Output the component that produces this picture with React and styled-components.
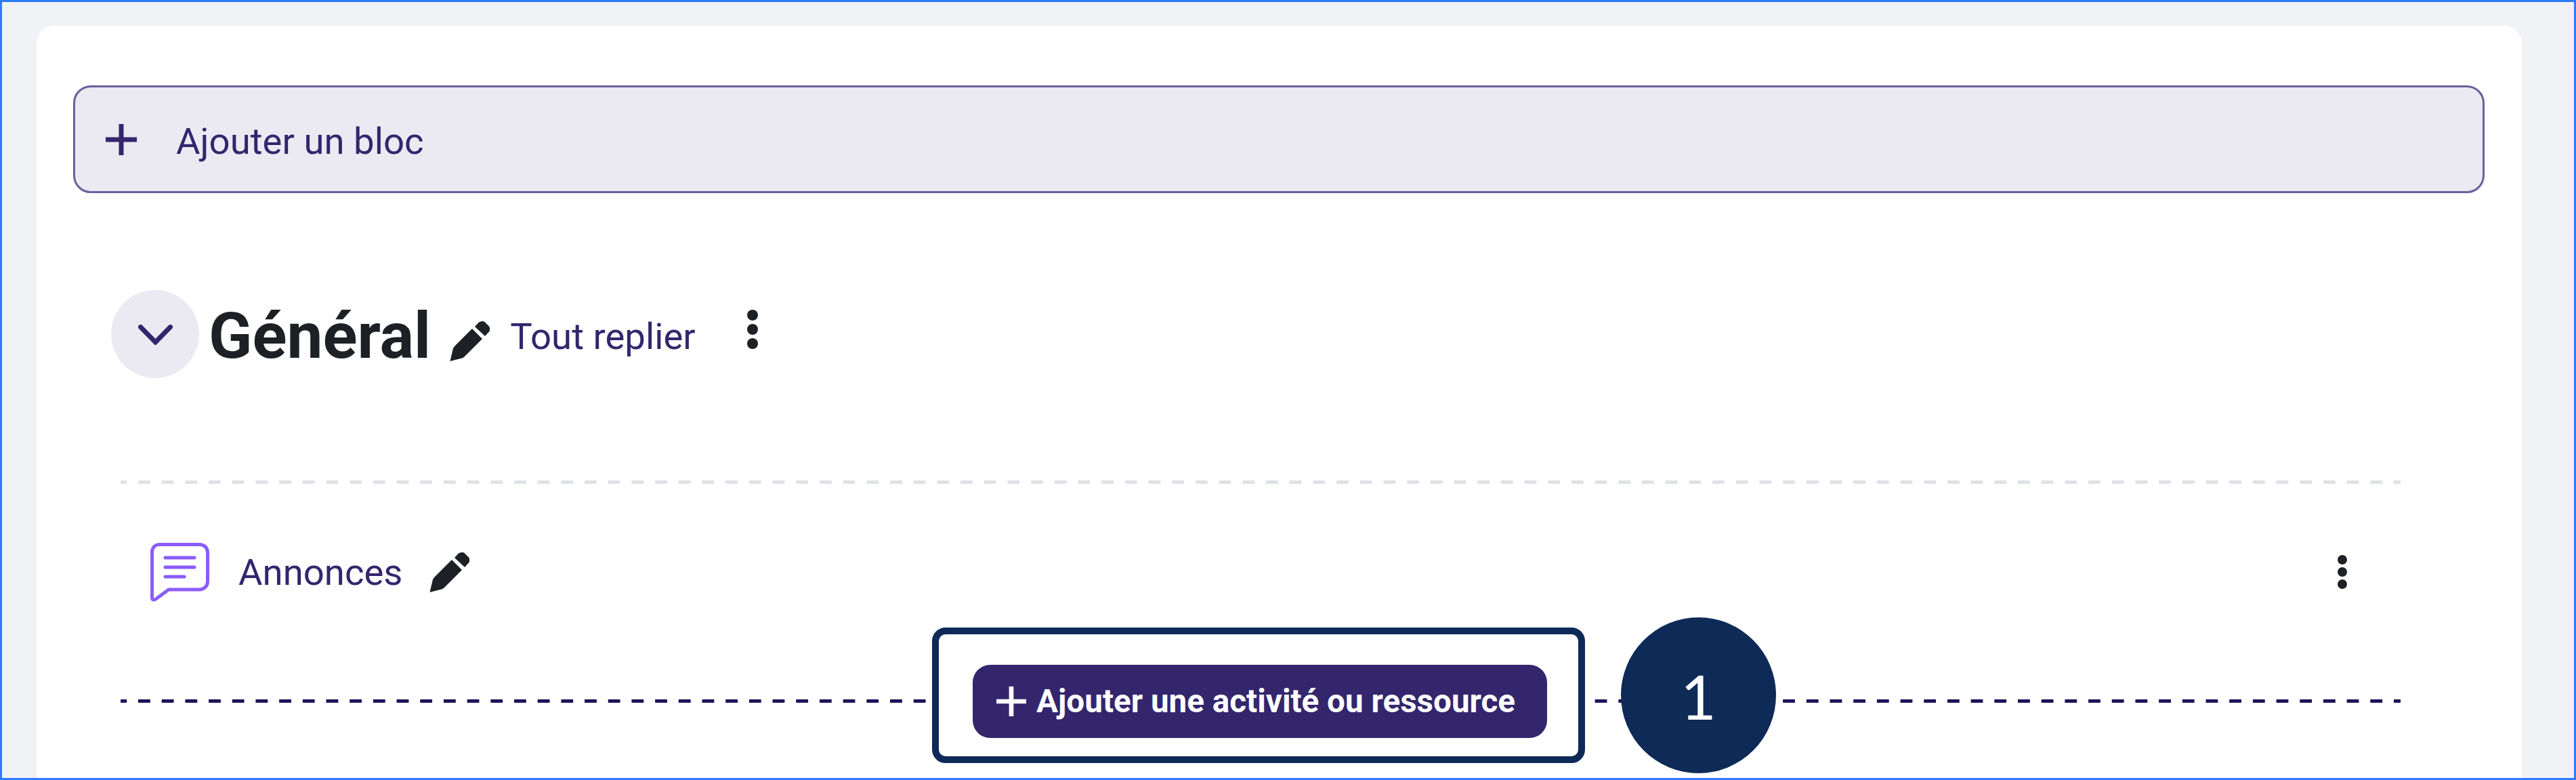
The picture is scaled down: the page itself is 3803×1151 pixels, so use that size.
import React from 'react';
import styled, { createGlobalStyle } from 'styled-components';

const GlobalStyle = createGlobalStyle`
  html, body {
    margin: 0;
    padding: 0;
    background: #f1f2f6;
  }
  body {
    font-family: 'Roboto', 'Liberation Sans', sans-serif;
  }
`;

const PURPLE = '#33266d';
const NAVY = '#0e2a57';

const Frame = styled.div`
  box-sizing: border-box;
  width: 3803px;
  height: 1151px;
  border: 3px solid #2f7bff;
  background: #f1f2f6;
  padding: 35px 77px 0 51px;
  overflow: hidden;
`;

const Card = styled.main`
  position: relative;
  box-sizing: border-box;
  height: 1113px;
  padding: 88px 55px 0 54px;
  background: #fff;
  border-radius: 26px 26px 0 0;
`;

const AddBlock = styled.div`
  box-sizing: border-box;
  height: 159px;
  display: flex;
  align-items: center;
  gap: 58px;
  padding-left: 45px;
  background: #ebeaf2;
  border: 3px solid #6b5f9b;
  border-radius: 26px;
  color: ${PURPLE};
  font-size: 54.5px;
  font-weight: 450;
`;

const AddBlockLabel = styled.span`
  padding-top: 4px;
`;

const SectionHeader = styled.header`
  display: flex;
  align-items: center;
  height: 130px;
  margin: 143px 0 0 56px;
`;

const Toggle = styled.div`
  width: 130px;
  height: 130px;
  border-radius: 50%;
  background: #ebeaf2;
  display: flex;
  align-items: center;
  justify-content: center;
  margin-right: 14px;
  padding-top: 2px;
  box-sizing: border-box;
`;

const Title = styled.h2`
  margin: 5px 28px 0 0;
  font-size: 94.5px;
  font-weight: 700;
  color: #1d2125;
  line-height: 130px;
`;

const HeaderPencil = styled.div`
  display: flex;
  margin-top: 20px;
`;

const CollapseLink = styled.span`
  margin: 5px 0 0 29px;
  font-size: 54.5px;
  font-weight: 450;
  color: ${PURPLE};
`;

const HeaderMenu = styled.div`
  margin: -14px 0 0 76px;
  display: flex;
`;

const Divider = styled.div`
  height: 5px;
  margin: ${(p) => p.$top}px 124px 0 70px;
  background-image: linear-gradient(90deg, ${(p) => p.$color} 0 18px, transparent 18px);
  background-size: 34.7px 100%;
  background-position: 26px 0;
`;

const ActivityRow = styled.div`
  display: flex;
  align-items: center;
  height: 88px;
  margin: 86px 0 0 113px;
  padding-right: 203px;
`;

const ActivityName = styled.span`
  margin-left: 43px;
  margin-right: 40px;
  font-size: 54.5px;
  font-weight: 450;
  color: ${PURPLE};
`;

const RowMenu = styled.div`
  margin-left: auto;
  display: flex;
`;

/* annotation on top of the screenshot */
const Highlight = styled.div`
  position: absolute;
  left: 1322px;
  top: 888px;
  box-sizing: border-box;
  width: 964px;
  height: 200px;
  background: #fff;
  border: 10px solid ${NAVY};
  border-radius: 20px;
  display: flex;
  align-items: center;
  justify-content: center;
`;

const AddButton = styled.div`
  box-sizing: border-box;
  width: 848px;
  height: 108px;
  margin: 18px 0 0 4px;
  display: flex;
  align-items: center;
  gap: 15px;
  padding-left: 35px;
  background: ${PURPLE};
  border-radius: 26px;
  color: #fff;
  font-size: 47.6px;
  font-weight: 700;
`;

const StepBadge = styled.div`
  position: absolute;
  left: 2339px;
  top: 873px;
  width: 229px;
  height: 230px;
  border-radius: 50%;
  background: ${NAVY};
  color: #fff;
  display: flex;
  align-items: center;
  justify-content: center;
  font-family: 'Lato', sans-serif;
  font-size: 91px;
  font-weight: 400;
`;

const PlusIcon = ({ size, color, stroke }) => (
  <svg width={size} height={size} viewBox="0 0 46 46" style={{ flex: 'none' }}>
    <path d="M23 0V46M0 23H46" stroke={color} strokeWidth={stroke} fill="none" strokeLinecap="round" />
  </svg>
);

const ChevronIcon = () => (
  <svg width="51" height="30" viewBox="0 0 51 30">
    <path d="M3.5 3.5L25.5 26L47.5 3.5" stroke={PURPLE} strokeWidth="7" fill="none" strokeLinecap="round" strokeLinejoin="miter" />
  </svg>
);

const PencilIcon = () => (
  <svg width="60" height="60" viewBox="0 0 60 60" style={{ flex: 'none' }}>
    <path d="M0.5 60L5 41Q6 39 7.5 37.5L33 12L48 27L22 53Q20 55 18 55.5Z" fill="#1d2125" />
    <path d="M37 9L43 2.5Q47 0 51 1.5L58 8.5Q60 12 58.5 16L52 23Z" fill="#1d2125" />
  </svg>
);

const DotsIcon = ({ r, gap }) => (
  <svg width={r * 2} height={r * 2 + gap * 2} style={{ flex: 'none' }}>
    <circle cx={r} cy={r} r={r} fill="#1d2125" />
    <circle cx={r} cy={r + gap} r={r} fill="#1d2125" />
    <circle cx={r} cy={r + gap * 2} r={r} fill="#1d2125" />
  </svg>
);

const ForumIcon = () => (
  <svg width="88" height="88" viewBox="0 0 88 88" style={{ flex: 'none' }}>
    <path
      d="M3.5 82V15C3.5 8 8 3.5 15 3.5H73C80 3.5 85.5 8 85.5 15V58C85.5 65 80 70 73 70H28L9 84C6 86 3.5 85 3.5 82Z"
      fill="none"
      stroke="#8a5cff"
      strokeWidth="5"
      strokeLinejoin="round"
    />
    <path d="M23 23H66M23 37H66M23 51H51" stroke="#8a5cff" strokeWidth="5" strokeLinecap="round" fill="none" />
  </svg>
);

export default function App() {
  return (
    <>
      <GlobalStyle />
      <Frame>
        <Card>
          <AddBlock>
            <PlusIcon size={46} color={PURPLE} stroke={7} />
            <AddBlockLabel>Ajouter un bloc</AddBlockLabel>
          </AddBlock>

          <SectionHeader>
            <Toggle>
              <ChevronIcon />
            </Toggle>
            <Title>Général</Title>
            <HeaderPencil>
              <PencilIcon />
            </HeaderPencil>
            <CollapseLink>Tout replier</CollapseLink>
            <HeaderMenu>
              <DotsIcon r={8} gap={21} />
            </HeaderMenu>
          </SectionHeader>

          <Divider $top={151} $color="#dfe1e6" />

          <ActivityRow>
            <ForumIcon />
            <ActivityName>Annonces</ActivityName>
            <PencilIcon />
            <RowMenu>
              <DotsIcon r={7} gap={18} />
            </RowMenu>
          </ActivityRow>

          <Divider $top={144} $color="#1f1259" />

          <Highlight>
            <AddButton>
              <PlusIcon size={44} color="#fff" stroke={7} />
              <span>Ajouter une activité ou ressource</span>
            </AddButton>
          </Highlight>
          <StepBadge>1</StepBadge>
        </Card>
      </Frame>
    </>
  );
}
